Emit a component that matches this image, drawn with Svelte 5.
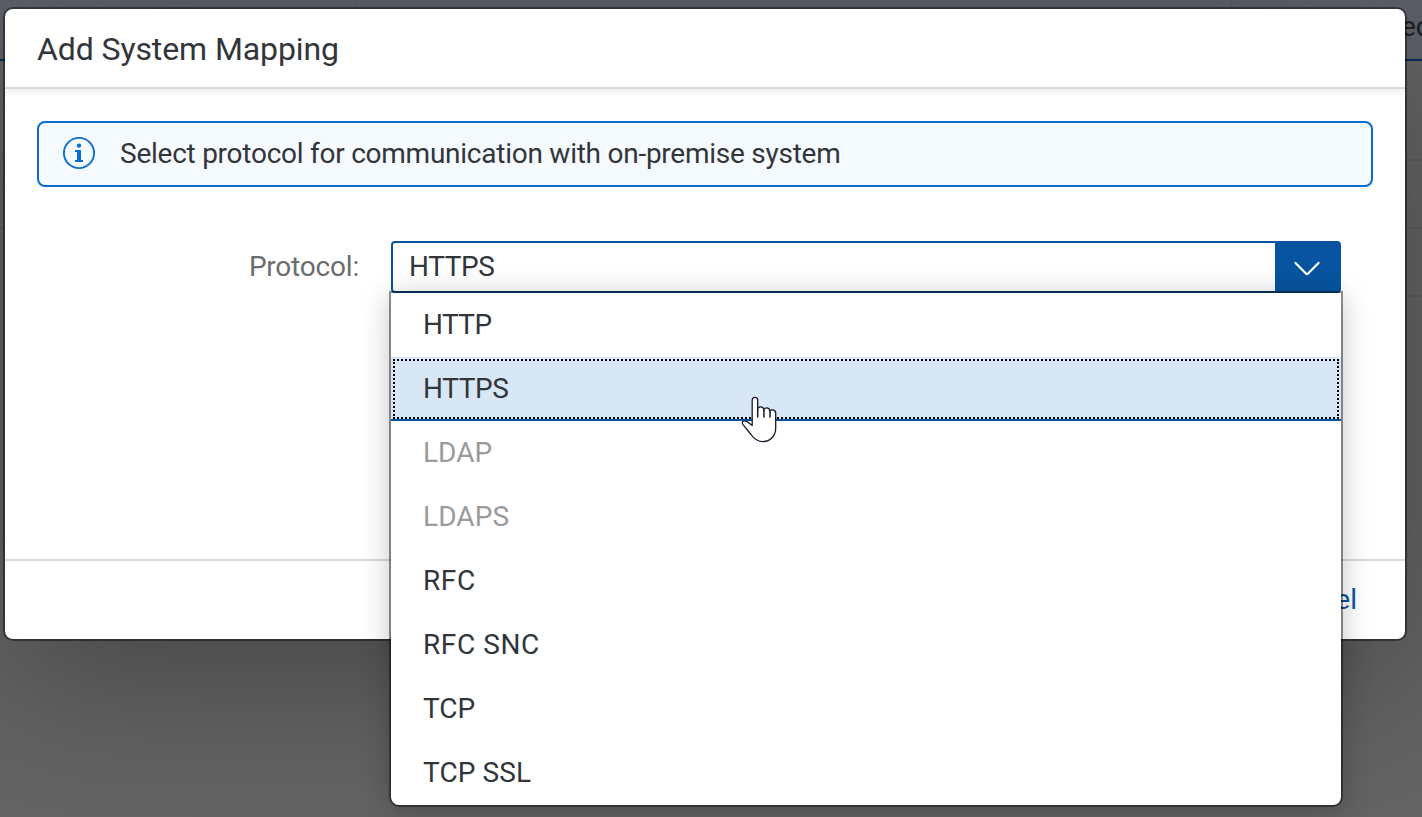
<script>
  const options = [
    { label: 'HTTP', spacing: -0.6 },
    { label: 'HTTPS', spacing: -0.4, selected: true },
    { label: 'LDAP', spacing: 0, disabled: true },
    { label: 'LDAPS', spacing: 0.1, disabled: true },
    { label: 'RFC', spacing: 0.6 },
    { label: 'RFC SNC', spacing: 0.6 },
    { label: 'TCP', spacing: 0 },
    { label: 'TCP SSL', spacing: 0.1 }
  ];
</script>

<div class="page">
  <div class="backdrop" aria-hidden="true">
    <div class="thead"><i></i><i></i><span>ed</span></div>
    <div class="row first"></div>
    <div class="row"></div>
    <div class="row"></div>
  </div>

  <section class="dialog" role="dialog" aria-labelledby="title">
    <header><h1 id="title">Add System Mapping</h1></header>
    <main>
      <div class="strip">
        <svg width="34" height="34" viewBox="0 0 34 34">
          <circle cx="17" cy="17" r="15.1" fill="none" stroke="#0a6ed1" stroke-width="1.9" />
          <circle cx="17" cy="9.6" r="2.2" fill="#0a6ed1" />
          <path d="M13 14H19V24H21V26H13V24H15V16H13Z" fill="#0a6ed1" />
        </svg>
        <span class="msg">Select protocol for communication with on-premise system</span>
      </div>
      <div class="field">
        <span class="label">Protocol:</span>
        <div class="select">
          <span class="value">HTTPS</span>
          <span class="arrow">
            <svg width="32" height="20" viewBox="0 0 32 20">
              <path d="M4.5 4L15.2 14.7Q16 15.5 16.8 14.7L27.5 4" fill="none" stroke="#fff" stroke-width="2.2" stroke-linecap="round" />
            </svg>
          </span>
          <ul class="popover">
            {#each options as option}
              <li
                class:selected={option.selected}
                class:disabled={option.disabled}
                style:letter-spacing="{option.spacing}px"
              >{option.label}</li>
            {/each}
          </ul>
        </div>
      </div>
    </main>
    <footer><span class="cancel">Cancel</span></footer>
  </section>

  <svg class="cursor" width="38" height="48" viewBox="0 0 38 48">
    <path
      d="M12.2 31V5.2C12.2 1.4 17.7 1.4 17.7 5.2V14.6C17.7 11 23.9 11 23.9 15.2C24.1 12 29.8 12 30 16.6C30.4 14 35.7 14 35.7 18.4V33C35.7 41 30 46.6 23.3 46.6C17.5 46.6 14.2 44.2 11 39.5L3 29.6C.8 26.5 4.2 24.9 7 26.6L12.2 30.5"
      fill="#fff" stroke="#16182a" stroke-width="1.3" stroke-linejoin="round" />
    <path d="M17.7 14V22.5M23.9 15V22.5M30 16.5V22.5" fill="none" stroke="#16182a" stroke-width="1.5" />
  </svg>
</div>

<style>
  :global(body) { margin: 0; overflow: hidden; }
  .page {
    position: relative;
    box-sizing: border-box;
    width: 1422px;
    height: 817px;
    padding: 9px 17px 0 5px;
    overflow: hidden;
    background: #646464;
    color: #32363a;
    font: 28px/36px Roboto, Arial, sans-serif;
  }
  .backdrop { position: absolute; inset: 0; }
  .thead {
    box-sizing: border-box;
    display: flex;
    height: 61px;
    border-bottom: 2px solid #06305a;
    background: #5d6268;
    color: #1e2022;
    white-space: nowrap;
    overflow: hidden;
  }
  .thead i { flex: none; box-sizing: border-box; width: 358px; border-right: 2px solid #5a5d61; }
  .thead i + i { width: 874px; }
  .thead span { padding: 9px 0 0 169px; }
  .row { box-sizing: border-box; height: 68px; border-bottom: 2px solid #5d5d5d; }
  .row.first { height: 100px; }
  .dialog {
    position: relative;
    display: flex;
    flex-direction: column;
    height: 630px;
    border-radius: 8px;
    background: #fff;
    box-shadow: 0 0 0 2px rgba(0, 0, 0, 0.42), 0 40px 160px rgba(0, 0, 0, 0.3);
  }
  header {
    box-sizing: border-box;
    height: 80px;
    padding: 20px 32px 0;
    border-bottom: 2px solid #d9d9d9;
    box-shadow: 0 2px 8px rgba(0, 0, 0, 0.1);
    clip-path: inset(0 0 -14px 0);
  }
  h1 { margin: 0; font-size: 32px; line-height: 40px; font-weight: 400; letter-spacing: -0.1px; }
  main { flex: 1; padding: 32px 32px 0; }
  .strip {
    box-sizing: border-box;
    display: flex;
    align-items: center;
    gap: 24px;
    height: 66px;
    padding: 0 0 2px 23px;
    border: 2px solid #0a6ed1;
    border-radius: 8px;
    background: #f5faff;
  }
  .strip svg { display: block; }
  .msg { padding-top: 2px; white-space: nowrap; letter-spacing: -0.25px; }
  .field { display: flex; margin-top: 54px; }
  .label { width: 322px; padding-top: 8px; box-sizing: border-box; text-align: right; color: #6a6d70; letter-spacing: -0.2px; }
  .select {
    position: relative;
    box-sizing: border-box;
    display: flex;
    justify-content: space-between;
    width: 950px;
    height: 52px;
    margin-left: 32px;
    border: 2px solid #0854a0;
    border-radius: 4px;
  }
  .value { padding: 6px 0 0 16px; letter-spacing: -0.4px; }
  .arrow { display: flex; align-items: center; justify-content: center; width: 64px; padding-top: 4px; box-sizing: border-box; background: #0854a0; }
  .popover {
    position: absolute;
    top: 50px;
    left: -2px;
    width: 950px;
    margin: 0;
    padding: 0;
    list-style: none;
    border-radius: 0 0 8px 8px;
    background: #fff;
    box-shadow: 0 0 0 2px rgba(0, 0, 0, 0.42), 0 4px 30px rgba(0, 0, 0, 0.25);
  }
  li { position: relative; box-sizing: border-box; height: 64px; padding: 14px 32px 0; }
  li.selected { background: #d8e7f5; border-bottom: 2px solid #0854a0; }
  li.selected::after { content: ''; position: absolute; inset: 2px 2px 0; border: 2px dotted #000; }
  li.disabled { color: #999b9d; }
  footer { box-sizing: border-box; height: 80px; padding: 21px 48px 0; border-top: 2px solid #d9d9d9; text-align: right; color: #0854a0; }
  .cursor { position: absolute; left: 740px; top: 395px; }
</style>
